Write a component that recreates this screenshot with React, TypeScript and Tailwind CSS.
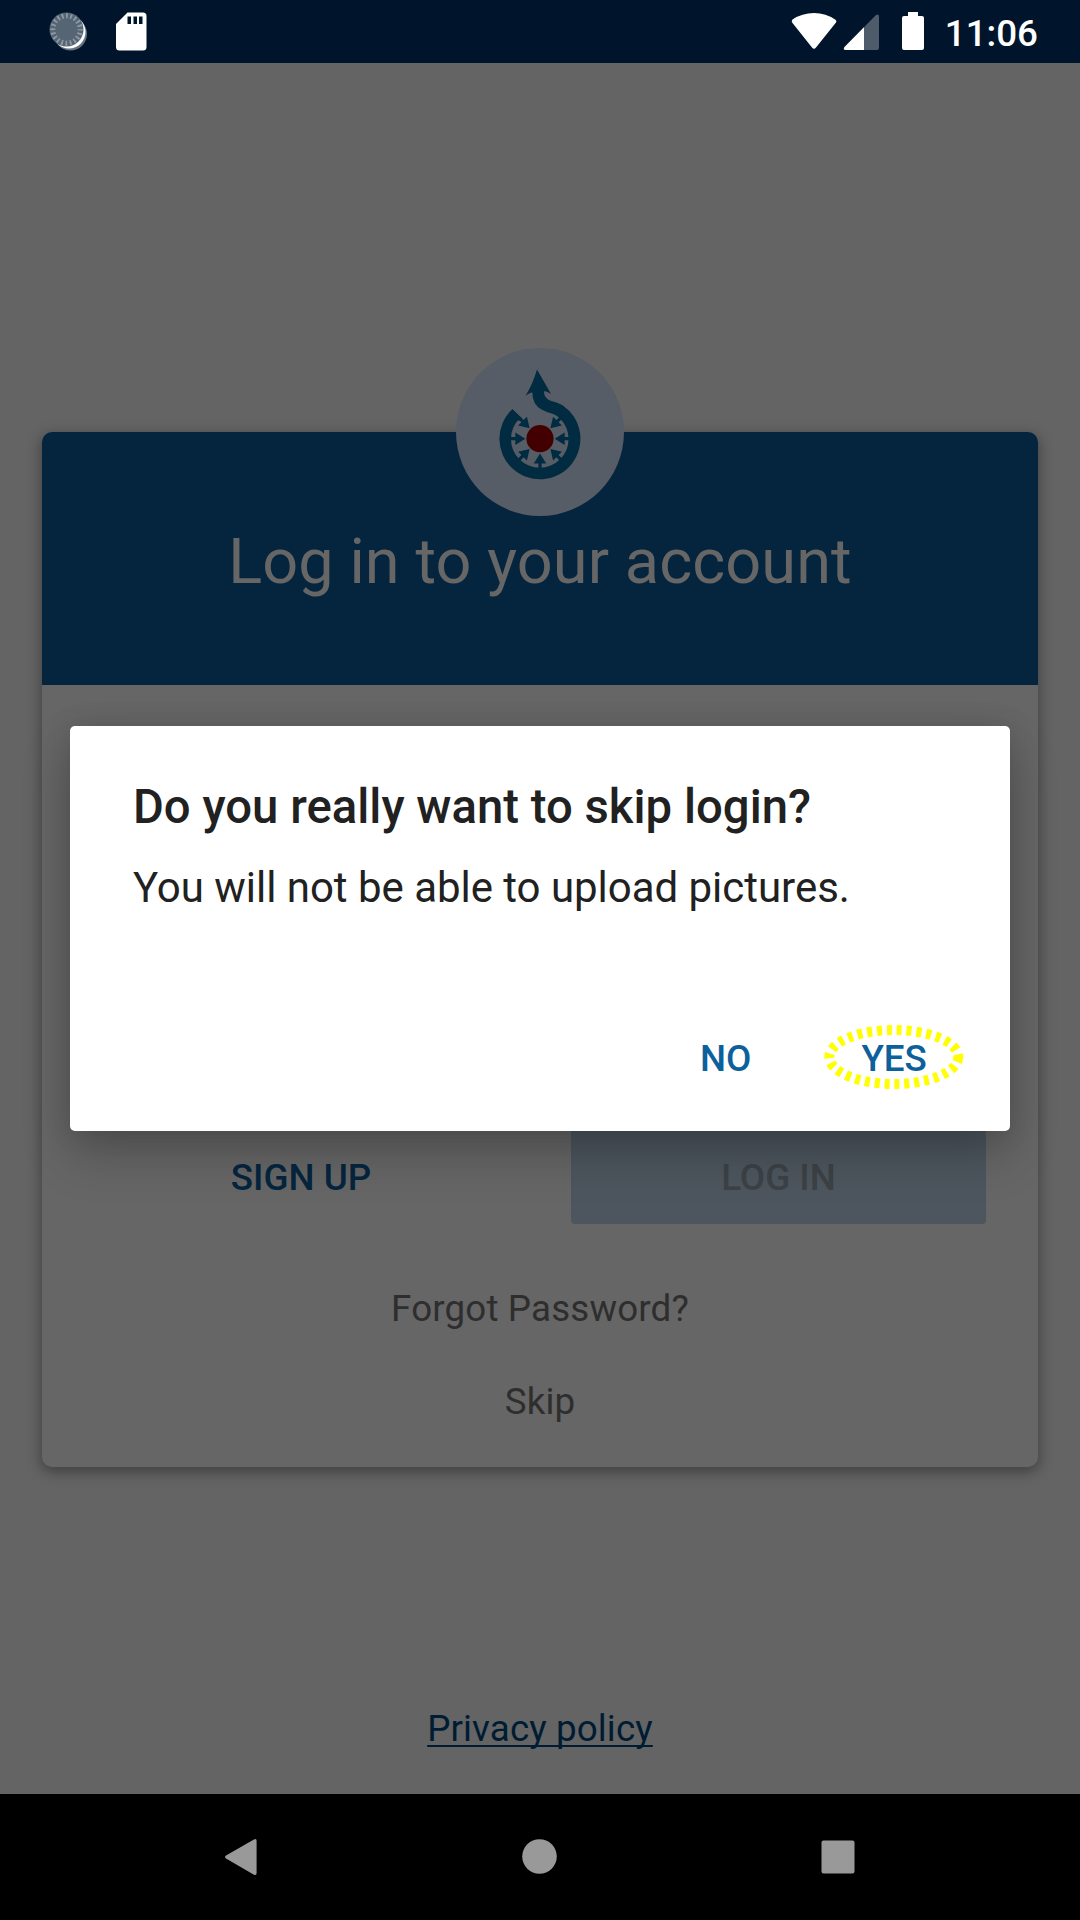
import React from "react";

function StatusBar() {
  return (
    <header className="flex h-[63px] shrink-0 items-start bg-[#00152b] text-white">
      <svg className="h-[63px] w-[200px]" viewBox="0 0 200 63">
        <circle cx="70.5" cy="34" r="16.5" fill="#66737f" />
        <circle cx="69" cy="32" r="16.5" fill="#fff" />
        <circle cx="66.5" cy="29.5" r="17" fill="#566574" />
        <circle cx="66.5" cy="29.5" r="13.7" fill="none" stroke="#8d98a4" strokeWidth="5" strokeDasharray="1.8 2.504" strokeDashoffset="0.9" />
        <path d="M127.5 12.5H143a3.5 3.5 0 0 1 3.5 3.5V47a3.5 3.5 0 0 1-3.5 3.5H119.5a3.5 3.5 0 0 1-3.5-3.5V24Z" fill="#fff" />
        <path d="M127.5 16.5h3.5v7.5h-3.5zM133.5 16.5h3.5v7.5h-3.5zM139 16.5h3.5v7.5h-3.5z" fill="#00152b" />
      </svg>
      <svg className="ml-auto h-[63px] w-[140px]" viewBox="790 0 140 63">
        <path d="M792.5 19.5Q791 21.2 792.3 22.8L812 47.5Q814 50 816 47.5L835.8 22.8Q837.3 21.2 835.5 19.8Q826 13 814 13T792.5 19.5Z" fill="#fff" />
        <path d="M844.5 47L875.5 15.5Q879 13 879 17V48Q879 50 877 50H846Q842.5 50 844.5 47Z" fill="#4d5b6b" />
        <path d="M844.5 47L864 27.2V50H846Q842.5 50 844.5 47Z" fill="#fff" />
        <path d="M908 12h10v4h4q2 0 2 2v30q0 2-2 2h-18q-2 0-2-2V18q0-2 2-2h4z" fill="#fff" />
      </svg>
      <span className="ml-[15px] mr-[42px] mt-[12px] text-[36.75px] leading-[43px] font-medium">11:06</span>
    </header>
  );
}

const arrowAngles = [45, 90, 135, 180, 225, 270, 315];

function Logo() {
  return (
    <div className="absolute left-1/2 top-[-84px] size-[168px] -translate-x-1/2 rounded-full bg-[#565d66]">
      <svg className="size-full" viewBox="456 348 168 168">
        <path
          d="M512.3 409.2A40.5 40.5 0 1 0 562.5 405.2Q558 402.5 550.5 400.8Q543 397.5 544.3 391Q547.5 391.3 551 394L537 369.5Q532.5 385 525.3 396Q529.5 392.5 532.4 392.5Q532.3 404.5 541.5 409.5Q547 412.5 553.3 414Q557.5 415.5 560 418.5A28.800 28.800 0 1 1 519.5 418.5L521.5 418Z"
          fill="#002b40"
        />
        {arrowAngles.map((angle) => (
          <path key={angle} d="M538.4 408.5h3.2v5.500h4.600L540 424l-6.200-10h4.600z" fill="#002b40" transform={`rotate(${angle} 540 438.7)`} />
        ))}
        <path d="M512.3 409.2L521.5 418L519 421L510 415Z" fill="#002b40" />
        <circle cx="540" cy="438.7" r="13.6" fill="#420000" />
      </svg>
    </div>
  );
}

function LoginCard() {
  return (
    <section className="relative mx-[42px] mt-[369px] h-[1035px] rounded-[10px] bg-[#666666] shadow-[0_4px_14px_1px_rgba(0,0,0,0.36)]">
      <div className="flex h-[253px] justify-center rounded-t-[10px] bg-[#05253e] pt-[93px]">
        <h1 className="text-[63px] leading-[74px] tracking-[0.1px] text-[#666666]">Log in to your account</h1>
      </div>
      <Logo />
      <div className="mt-[355px] flex px-[52px]">
        <button className="h-[184px] w-[414px] pt-[91px] text-[36.75px] font-medium text-[#05253e]">SIGN UP</button>
        <button className="ml-[63px] h-[184px] w-[415px] rounded-[4px] bg-[#4d565e] pt-[91px] text-[36.75px] font-medium text-[#3c4246]">LOG IN</button>
      </div>
      <div className="flex flex-col items-center pt-[63px] text-[36.75px] leading-[43px] text-[#2e2e2e]">
        <a className="tracking-[0.15px]">Forgot Password?</a>
        <a className="mt-[50px] tracking-[0.15px]">Skip</a>
      </div>
    </section>
  );
}

function SkipDialog() {
  return (
    <div role="dialog" className="absolute left-[70px] top-[726px] flex h-[405px] w-[940px] flex-col rounded-[5px] bg-white px-[63px] pt-[53px] text-[#212121] shadow-[0_24px_48px_rgba(0,0,0,0.22),0_0_28px_rgba(0,0,0,0.12)]">
      <h2 className="whitespace-nowrap text-[47.25px] leading-[56px] font-medium tracking-[0.02px]">Do you really want to skip login?</h2>
      <p className="mt-[28px] whitespace-nowrap text-[42px] leading-[50px] tracking-[-0.03px]">You will not be able to upload pictures.</p>
      <div className="mt-[124px] flex text-[36.75px] leading-[43px] font-medium text-[#0c609c]">
        <button className="ml-[567px]">NO</button>
        <button className="relative ml-[110px]">
          YES
          <svg className="absolute left-[-39px] top-[-14px] h-[68px] w-[144px]" viewBox="822 1023 144 68">
            <ellipse cx="893.8" cy="1057" rx="64.5" ry="27" fill="none" stroke="#ffff00" strokeWidth="10" strokeDasharray="5 4.88" />
          </svg>
        </button>
      </div>
    </div>
  );
}

function NavigationBar() {
  return (
    <nav className="flex h-[126px] items-center justify-between bg-black px-[221px]">
      <svg className="size-[40px]" viewBox="221 1837 40 40"><path d="M226 1855.5L253.5 1839.7Q256.6 1838 256.6 1841V1873Q256.6 1876 253.5 1874.5L226 1858.5Q224 1857 226 1855.5Z" fill="#999" /></svg>
      <svg className="size-[40px]" viewBox="520 1837 40 40"><circle cx="539.5" cy="1856.5" r="17.3" fill="#999" /></svg>
      <svg className="size-[40px]" viewBox="819 1837 40 40"><rect x="821.5" y="1840.5" width="33" height="33" rx="2" fill="#999" /></svg>
    </nav>
  );
}

export default function App() {
  return (
    <div className="relative flex h-[1920px] w-[1080px] flex-col overflow-hidden bg-[#646464] [font-family:Roboto,sans-serif]">
      <StatusBar />
      <main className="flex h-[1731px] flex-col">
        <LoginCard />
        <a className="mx-auto mt-[240px] text-[36.75px] leading-[43px] tracking-[0.12px] text-[#001c33] underline decoration-2 underline-offset-[4px] [text-decoration-skip-ink:none]">Privacy policy</a>
      </main>
      <NavigationBar />
      <SkipDialog />
    </div>
  );
}
